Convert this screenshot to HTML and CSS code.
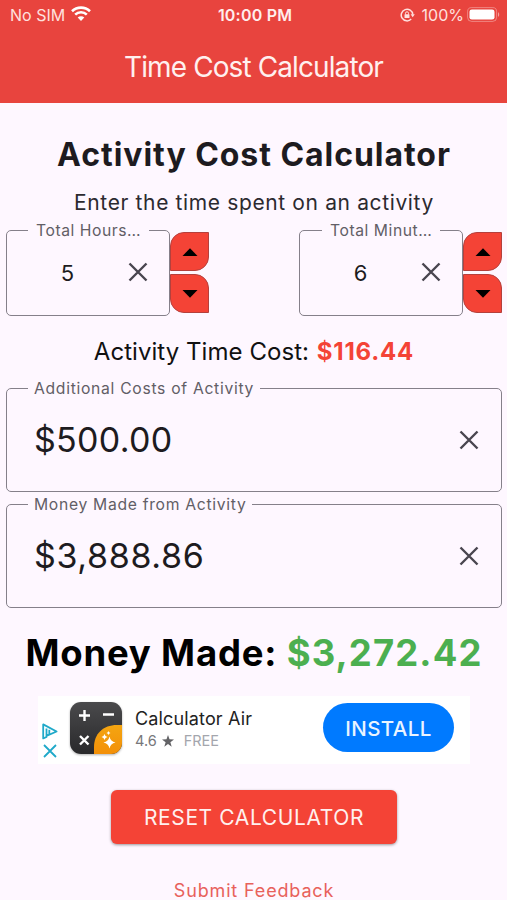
FILE: index.html
```html
<!DOCTYPE html>
<html lang="en">
<head>
    <meta charset="UTF-8">
    <meta name="viewport" content="width=device-width, initial-scale=1.0">
    <title>Time Cost Calculator</title>
    <link rel="stylesheet" href="styles.css">
</head>
<body>
    <header class="app-header">
        <div class="status-bar">
            <div class="status-left">
                <span class="carrier">No SIM</span>
                <svg class="wifi" width="20" height="15" viewBox="0 0 20 15" fill="none" stroke="#fff" stroke-width="2.6">
                    <path d="M1 5.2a13 13 0 0 1 18 0"/>
                    <path d="M4.2 8.6a8.3 8.3 0 0 1 11.6 0"/>
                    <path d="M10 15l-3.3-3.4a4.7 4.7 0 0 1 6.6 0z" fill="#fff" stroke="none"/>
                </svg>
            </div>
            <span class="clock">10:00 PM</span>
            <div class="status-right">
                <svg class="lock" width="15" height="14" viewBox="0 0 15 14" fill="none" stroke="#ffe0de" stroke-width="1.5">
                    <path d="M11.2 11.1a5.8 5.8 0 1 1 1.6-4.6"/>
                    <path d="M10.6 6.2h4.2l-2.1 3z" fill="#ffe0de" stroke="none"/>
                    <rect x="4.500" y="6.200" width="5" height="3.800" rx=".6" fill="#ffe0de" stroke="none"/>
                    <path d="M5.5 6.5V5.3a1.5 1.5 0 0 1 3 0v1.2" stroke-width="1"/>
                </svg>
                <span class="battery-text">100%</span>
                <svg class="battery" width="33" height="15" viewBox="0 0 33 15">
                    <rect x=".6" y=".6" width="29" height="13.8" rx="4" fill="none" stroke="#fff" stroke-opacity=".35" stroke-width="1"/>
                    <rect x="2.5" y="2.4" width="25" height="10.2" rx="2.4" fill="#fff"/>
                    <path d="M31 5.2c1.6.6 1.6 4 0 4.6z" fill="#fff" fill-opacity=".5"/>
                </svg>
            </div>
        </div>
        <div class="app-title"><span>Time Cost Calculator</span></div>
    </header>

    <main class="content">
        <h1 class="heading">Activity Cost Calculator</h1>
        <p class="subheading">Enter the time spent on an activity</p>

        <div class="time-row">
            <div class="time-group">
                <fieldset class="field time-field">
                    <legend>Total Hours…</legend>
                    <span class="time-value">5</span>
                    <svg class="clear" width="20" height="20" viewBox="0 0 20 20"><path d="M1.5 1.5l17 17M18.5 1.5l-17 17"/></svg>
                </fieldset>
                <div class="stepper">
                    <button class="step"><svg width="16" height="8" viewBox="0 0 16 8"><path d="M.5 8L8 .3 15.5 8z"/></svg></button>
                    <button class="step"><svg width="16" height="8" viewBox="0 0 16 8"><path d="M.5 0L8 7.7 15.5 0z"/></svg></button>
                </div>
            </div>
            <div class="time-group">
                <fieldset class="field time-field minutes">
                    <legend>Total Minut…</legend>
                    <span class="time-value">6</span>
                    <svg class="clear" width="20" height="20" viewBox="0 0 20 20"><path d="M1.5 1.5l17 17M18.5 1.5l-17 17"/></svg>
                </fieldset>
                <div class="stepper">
                    <button class="step"><svg width="16" height="8" viewBox="0 0 16 8"><path d="M.5 8L8 .3 15.5 8z"/></svg></button>
                    <button class="step"><svg width="16" height="8" viewBox="0 0 16 8"><path d="M.5 0L8 7.7 15.5 0z"/></svg></button>
                </div>
            </div>
        </div>

        <p class="time-cost">Activity Time Cost: <b>$116.44</b></p>

        <fieldset class="field money-field">
            <legend>Additional Costs of Activity</legend>
            <span class="money-value">$500.00</span>
            <svg class="clear" width="20" height="20" viewBox="0 0 20 20"><path d="M1.5 1.5l17 17M18.5 1.5l-17 17"/></svg>
        </fieldset>
        <fieldset class="field money-field">
            <legend>Money Made from Activity</legend>
            <span class="money-value made">$3,888.86</span>
            <svg class="clear" width="20" height="20" viewBox="0 0 20 20"><path d="M1.5 1.5l17 17M18.5 1.5l-17 17"/></svg>
        </fieldset>

        <p class="result">Money Made: <b>$3,272.42</b></p>

        <div class="ad">
            <div class="ad-marks">
                <svg width="16" height="17" viewBox="0 0 16 17" fill="none" stroke="#1fa9c9" stroke-width="1.8" stroke-linejoin="round">
                    <path d="M4.5 12.8L14.6 8.5 1.2 1.4v14l3.3-1.4V5.5"/>
                    <path d="M7.3 6.8v4.4"/>
                </svg>
                <svg width="14" height="14" viewBox="0 0 14 14" stroke="#1fa9c9" stroke-width="1.8"><path d="M1 1l12 12M13 1L1 13"/></svg>
            </div>
            <svg class="ad-icon" width="52" height="52" viewBox="0 0 52 52">
                <defs>
                    <linearGradient id="dark" x1="0" y1="0" x2="0" y2="1"><stop offset="0" stop-color="#4a4a4c"/><stop offset="1" stop-color="#29292b"/></linearGradient>
                    <linearGradient id="gold" x1="0" y1="0" x2="0" y2="1"><stop offset="0" stop-color="#f4a511"/><stop offset="1" stop-color="#f39008"/></linearGradient>
                    <clipPath id="tile"><rect width="52" height="52" rx="11"/></clipPath>
                </defs>
                <g clip-path="url(#tile)">
                    <rect width="52" height="52" fill="url(#dark)"/>
                    <path d="M52 23H47C33 23 24 32 24 45v7h28z" fill="url(#gold)"/>
                </g>
                <path d="M9 13.5h11M14.5 8v11M33 12.5h11M10 34l8.5 8.5M18.5 34L10 42.5" stroke="#fff" stroke-width="2.4" fill="none"/>
                <path d="M39.5 34.5q1 5 6 6-5 1-6 6-1-5-6-6 5-1 6-6z" fill="#fff"/>
                <path d="M34.5 32q.5 2.5 3 3-2.5.5-3 3-.5-2.5-3-3 2.5-.5 3-3zM38.5 29q.3 1.700 2 2-1.700.3-2 2-.3-1.700-2-2 1.700-.3 2-2z" fill="#fff"/>
            </svg>
            <div class="ad-info">
                <div class="ad-name">Calculator Air</div>
                <div class="ad-meta">
                    <span class="rating">4.6</span>
                    <svg width="12" height="12" viewBox="0 0 12 12"><path d="M6 0l1.5 4.3 4.5.1-3.6 2.8 1.3 4.5L6 9.1l-3.7 2.6 1.3-4.5L0 4.4l4.5-.1z" fill="#636366"/></svg>
                    <span class="free">FREE</span>
                </div>
            </div>
            <button class="install">INSTALL</button>
        </div>

        <button class="reset">RESET CALCULATOR</button>
        <a class="feedback">Submit Feedback</a>
    </main>
</body>
</html>
```
FILE: styles.css
```css
* {
    margin: 0;
    padding: 0;
    box-sizing: border-box;
}

body {
    font-family: Inter, "Liberation Sans", sans-serif;
    background: #fef7ff;
    color: #1d1b20;
    height: 900px;
    overflow: hidden;
    white-space: nowrap;
}

button {
    border: none;
    font-family: inherit;
    cursor: pointer;
}

.app-header {
    height: 103px;
    background: #e8443e;
    color: #fff;
}

.status-bar {
    height: 30px;
    padding: 0 7px 0 10px;
    display: grid;
    grid-template-columns: 1fr auto 1fr;
    align-items: center;
    font-size: 16px;
}

.status-left,
.status-right {
    display: flex;
    align-items: center;
    color: #ffe0de;
}

.status-left {
    gap: 6px;
}

.status-right {
    justify-content: flex-end;
}

.wifi {
    margin-bottom: 3px;
}

.battery {
    margin-bottom: 2px;
}

.clock {
    font-weight: 600;
    letter-spacing: 0.2px;
    color: #ffeeed;
}

.battery-text {
    margin: 0 3px 0 7px;
}

.app-title {
    height: 73px;
    display: flex;
    justify-content: center;
    align-items: center;
    font-size: 28px;
    letter-spacing: -0.9px;
    color: #fff0ef;
}

.content {
    padding: 33px 5px 0 6px;
    display: flex;
    flex-direction: column;
    align-items: center;
}

.heading {
    font-size: 32px;
    font-weight: 700;
    line-height: 38px;
    letter-spacing: 0.95px;
}

.subheading {
    margin-top: 15px;
    font-size: 21px;
    line-height: 28px;
    letter-spacing: 0.63px;
    color: #2c2a30;
}

.time-row {
    width: 100%;
    margin-top: 5px;
    display: flex;
    justify-content: space-between;
}

.time-group {
    display: flex;
}

.field {
    border: 1px solid #85808a;
    border-radius: 5px;
    display: flex;
    align-items: center;
    min-width: 0;
}

.field legend {
    color: #625e66;
    font-size: 15.7px;
    height: 16px;
    line-height: 18px;
    letter-spacing: 0.7px;
    padding: 0 6px;
}

.time-field {
    width: 164px;
    height: 94px;
    padding: 0 21px 9px;
}

.time-field legend {
    padding: 0 8px;
    letter-spacing: 0.55px;
}

.minutes legend {
    margin-left: 1px;
}

.time-value {
    width: 79px;
    text-align: center;
    font-size: 22px;
    line-height: 28px;
    padding-top: 1px;
}

.clear {
    margin-left: auto;
    fill: none;
    stroke: #49454f;
    stroke-width: 2.4;
}

.stepper {
    padding-top: 10px;
    display: flex;
    flex-direction: column;
    gap: 3px;
}

.step {
    width: 39px;
    height: 39px;
    background: #f44336;
    border: 1px solid #b5403c;
    border-radius: 14px 0 14px 0;
    display: flex;
    align-items: center;
    justify-content: center;
}

.step:last-child {
    border-radius: 0 14px 0 14px;
}

.time-cost {
    margin-top: 20px;
    font-size: 24px;
    line-height: 32px;
    letter-spacing: 0.05px;
    color: #111;
}

.time-cost b {
    margin-left: 1px;
    font-weight: 700;
    letter-spacing: 0.8px;
    color: #f44336;
}

.money-field {
    width: 100%;
    height: 112px;
    padding: 0 22px 7px 21px;
    margin-top: 12px;
}

.money-field + .money-field {
    margin-top: 4px;
}

.money-value {
    padding-left: 6px;
    font-size: 34px;
    line-height: 88px;
    letter-spacing: 0.3px;
}

.money-value.made {
    letter-spacing: 0.65px;
}

.result {
    margin-top: 23px;
    font-size: 36.5px;
    font-weight: 700;
    line-height: 44px;
    letter-spacing: 0.8px;
    color: #000;
}

.result b {
    font-weight: 700;
    letter-spacing: 1.1px;
    color: #4caf50;
}

.ad {
    width: 432px;
    height: 68px;
    margin-top: 21px;
    padding: 0 16px 0 3px;
    background: #fff;
    display: flex;
    align-items: center;
}

.ad-marks {
    display: flex;
    flex-direction: column;
    align-items: center;
    gap: 4px;
    padding: 21px 12px 0 0;
    width: 29px;
}

.ad-icon {
    margin-top: -4px;
    filter: drop-shadow(0 1px 1px rgba(0, 0, 0, 0.3));
}

.ad-info {
    margin: 0 auto 0 13px;
}

.ad-name {
    font-size: 18px;
    line-height: 22px;
    letter-spacing: 0.15px;
    color: #222;
}

.ad-meta {
    display: flex;
    align-items: center;
    font-size: 14.5px;
    line-height: 22px;
    color: #77777b;
}

.ad-meta svg {
    margin: 0 10px 0 5px;
}

.free {
    color: #a4a6ad;
}

.install {
    width: 131px;
    height: 49px;
    margin-top: -5px;
    padding-top: 2px;
    border-radius: 25px;
    background: #007aff;
    color: #eaf4ff;
    font-size: 20.5px;
    font-weight: 500;
    letter-spacing: 0.4px;
}

.reset {
    width: 286px;
    height: 54px;
    margin-top: 26px;
    border-radius: 6px;
    background: #f44336;
    box-shadow: 0 1px 3px rgba(0, 0, 0, 0.4);
    color: #fff0ee;
    font-size: 21px;
    letter-spacing: 0.6px;
}

.feedback {
    margin-top: 35px;
    font-size: 18px;
    line-height: 24px;
    letter-spacing: 0.85px;
    color: #e8615b;
}
```
